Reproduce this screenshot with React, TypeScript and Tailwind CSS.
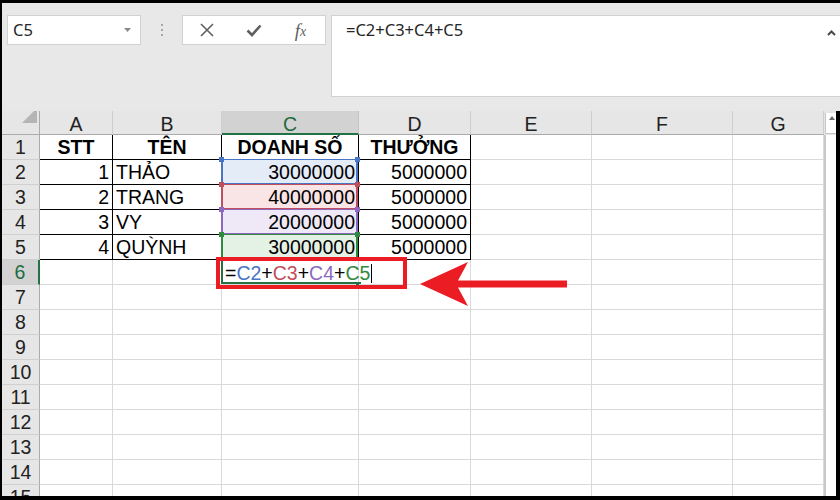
import clsx from "clsx";

const COLS = ["A", "B", "C", "D", "E", "F", "G"];
const ROWS = Array.from({ length: 15 }, (_, i) => i + 1);

const DATA: Record<number, string[]> = {
  1: ["STT", "TÊN", "DOANH SỐ", "THƯỞNG"],
  2: ["1", "THẢO", "30000000", "5000000"],
  3: ["2", "TRANG", "40000000", "5000000"],
  4: ["3", "VY", "20000000", "5000000"],
  5: ["4", "QUỲNH", "30000000", "5000000"],
};

// colour of each referenced range in the formula
const RANGES: Record<number, { line: string; fill: string; dot: string }> = {
  2: { line: "border-[#4a74c4]", fill: "bg-[#e4ecf8]", dot: "bg-[#4a74c4]" },
  3: { line: "border-[#c14e5b]", fill: "bg-[#f9e4e6]", dot: "bg-[#c14e5b]" },
  4: { line: "border-[#8c68bf]", fill: "bg-[#efe9f7]", dot: "bg-[#8c68bf]" },
  5: { line: "border-[#2f8a40]", fill: "bg-[#e4f1e5]", dot: "bg-[#2f8a40]" },
};

function FormulaBar() {
  return (
    <div className="h-[108px] shrink-0 flex items-start pt-[12px] pl-[5px] font-['Noto_Sans',sans-serif] text-[#262626]">
      {/* Name box */}
      <div className="w-[134px] h-[30px] bg-white border border-[#d2d2d2] flex items-center justify-between pl-[5px] pr-[9px] text-[16.5px]">
        <span>C5</span>
        <svg width="7" height="4" viewBox="0 0 7 4">
          <path d="M0 0h7L3.5 4z" fill="#8a8a8a" />
        </svg>
      </div>

      <div className="w-[41px] h-[30px] flex flex-col items-center justify-center gap-[3px]">
        <span className="w-[2px] h-[2px] bg-[#a8a8a8]" />
        <span className="w-[2px] h-[2px] bg-[#a8a8a8]" />
        <span className="w-[2px] h-[2px] bg-[#a8a8a8]" />
      </div>

      {/* Cancel / Enter / Insert function */}
      <div className="w-[144px] h-[30px] bg-white border border-[#d2d2d2] flex items-center">
        <div className="w-[47px] flex justify-center">
          <svg width="14" height="14" viewBox="0 0 14 14">
            <path d="M1 1l12 12M13 1L1 13" stroke="#5f5f5f" strokeWidth="1.6" />
          </svg>
        </div>
        <div className="w-[47px] flex justify-center">
          <svg width="16" height="13" viewBox="0 0 16 13">
            <path d="M1.5 6.5l4.5 4.5L14.5 1.5" stroke="#5f5f5f" strokeWidth="2.6" fill="none" />
          </svg>
        </div>
        <div className="w-[47px] flex justify-center font-['Liberation_Serif',serif] italic text-[#5f5f5f] text-[19px] leading-none">
          <span>f</span>
          <span className="text-[14px] mt-[4px]">x</span>
        </div>
      </div>

      {/* Formula input */}
      <div className="ml-[5px] flex-1 h-[82px] bg-white border border-r-0 border-[#d2d2d2] flex justify-between pl-[14px] pr-[4px] pt-[2px] text-[16.5px]">
        <span>=C2+C3+C4+C5</span>
        <svg width="9" height="6" viewBox="0 0 9 6" className="mt-[12px]">
          <path d="M1 5l3.5-3.5L8 5" stroke="#4a4a4a" strokeWidth="2" fill="none" />
        </svg>
      </div>
    </div>
  );
}

function Cell({ r, c }: { r: number; c: number }) {
  const val = DATA[r]?.[c];
  const inTable = r <= 5 && c <= 3;
  const isNum = !!val && /^\d+$/.test(val);
  const range = c === 2 ? RANGES[r] : undefined;
  const editing = r === 6 && c === 2;

  return (
    <div
      className={clsx(
        "relative h-[25px] border-r border-b leading-[24px] whitespace-nowrap",
        inTable ? "border-black" : "border-[#d9d9d9]",
        range?.fill,
        r === 1 ? "font-bold text-center" : isNum ? "text-right pr-[3px]" : "pl-[3px]"
      )}
    >
      {val}

      {range && (
        <div className={clsx("absolute -left-[1px] -top-[1px] right-0 bottom-0 border-x-2 border-y", range.line)}>
          <span className={clsx("absolute -left-[4px] -top-[3px] w-[5px] h-[5px]", range.dot)} />
          <span className={clsx("absolute -right-[4px] -top-[3px] w-[5px] h-[5px]", range.dot)} />
        </div>
      )}

      {editing && (
        <>
          <div className="absolute -left-[1px] -top-[1px] right-0 bottom-0 border-l-2 border-b-2 border-[#217346]" />
          <span className="absolute -right-[3px] -bottom-[3px] w-[5px] h-[5px] bg-[#217346]" />
          <div className="absolute left-0 top-[1px] pl-[3px] leading-[24px]">
            <span>=</span>
            <span className="text-[#4a74c4]">C2</span>
            <span>+</span>
            <span className="text-[#c14e5b]">C3</span>
            <span>+</span>
            <span className="text-[#8c68bf]">C4</span>
            <span>+</span>
            <span className="text-[#2f8a40]">C5</span>
            <span className="inline-block w-[1px] h-[19px] bg-black align-[-3px] ml-[1px]" />
          </div>
          {/* annotation box */}
          <div className="absolute -left-[6px] -top-[3px] w-[191px] h-[32px] border-4 border-[#ec1c24] z-10" />
        </>
      )}
    </div>
  );
}

function Sheet() {
  return (
    <div className="flex-1 min-h-0 flex overflow-hidden border-r-4 border-black">
      <div className="relative grid grid-cols-[38px_73px_109px_137px_112px_121px_141px_91px] content-start bg-white font-['Liberation_Sans',Arial,sans-serif] text-[19.5px] text-black">
        {/* corner */}
        <div className="relative h-[24px] bg-[#e6e6e6] border-r border-b border-[#ababab]">
          <svg width="15" height="15" viewBox="0 0 15 15" className="absolute right-[2px] top-[-3px]">
            <path d="M15 0v15H0z" fill="#b5b5b5" />
          </svg>
        </div>
        {COLS.map((col, i) => (
          <div
            key={col}
            className={clsx(
              "h-[24px] text-center leading-[22px] pt-[2px] border-r",
              i === 2
                ? "bg-[#d2d2d2] text-[#1e6b3e] border-b-2 border-r-[#c4c4c4] border-b-[#217346]"
                : "bg-[#e6e6e6] text-[#222] border-b border-r-[#cdcdcd] border-b-[#ababab]"
            )}
          >
            {col}
          </div>
        ))}

        {ROWS.map((r) => (
          <div key={r} className="contents">
            <div
              className={clsx(
                "h-[25px] text-center leading-[24px] border-b border-b-[#d0d0d0]",
                r === 6
                  ? "bg-[#d2d2d2] text-[#1e6b3e] border-r-2 border-r-[#217346]"
                  : "bg-[#e6e6e6] text-[#222] border-r border-r-[#ababab]"
              )}
            >
              {r}
            </div>
            {COLS.map((_, c) => (
              <Cell key={c} r={r} c={c} />
            ))}
          </div>
        ))}

        {/* red arrow pointing at the formula */}
        <svg width="152" height="48" viewBox="0 0 152 48" className="absolute left-[416px] top-[149px] z-10">
          <path d="M2 24L50 2L40 20.5H149V27.5H40L50 46Z" fill="#ec1c24" />
        </svg>
      </div>

      {/* vertical scrollbar */}
      <div className="flex-1 flex flex-col bg-white">
        <div className="h-[24px] bg-[#e6e6e6] pt-[2px] pl-[1px]">
          <div className="h-[21px] bg-white border-l border-b border-[#c6c6c6] flex justify-end pr-[1px] pt-[3px]">
            <svg width="6" height="4" viewBox="0 0 6 4">
              <path d="M0 4L3 0L6 4z" fill="#6a6a6a" />
            </svg>
          </div>
        </div>
        <div className="flex-1 border-l-2 border-[#c8c8c8]" />
      </div>
    </div>
  );
}

export default function App() {
  return (
    <div className="w-[840px] h-[500px] bg-black pt-[3px] pl-[2px] pb-[4px] overflow-hidden">
      <div className="h-full bg-[#e8e8e8] flex flex-col">
        <FormulaBar />
        <Sheet />
      </div>
    </div>
  );
}
